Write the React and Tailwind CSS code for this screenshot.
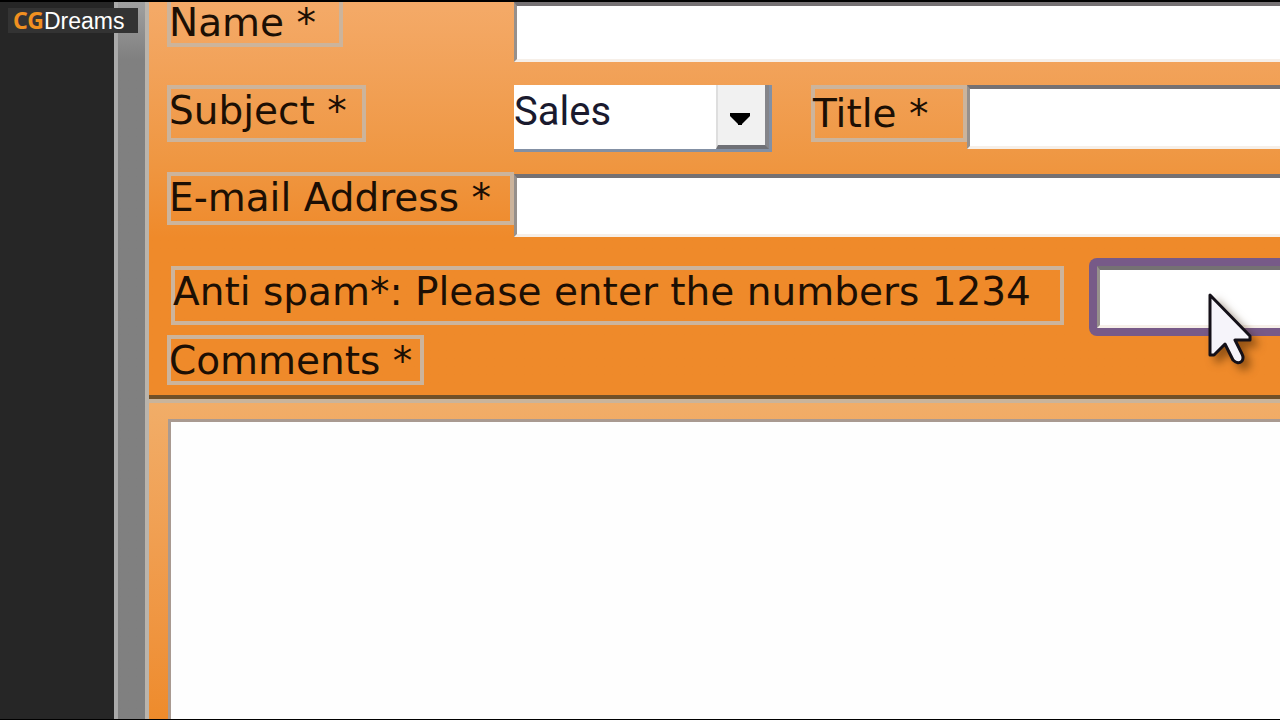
import { useState } from 'react';

const fieldClass =
  'block min-w-0 flex-1 border-l-[3px] border-t-4 border-b-[3px] border-l-[#96908c] border-t-[#757173] border-b-[#f6efe8] bg-white px-2 text-4xl outline-none';

function FieldLabel({ htmlFor, className, children }) {
  return (
    <label
      htmlFor={htmlFor}
      className={`block shrink-0 whitespace-nowrap pl-[2px] text-[39px] leading-[43px] text-[#1c0f04] inset-ring-4 inset-ring-[#ccb49c] ${className}`}
    >
      {children}
    </label>
  );
}

function Logo() {
  return (
    <div className="absolute left-2 top-1.5 flex h-[25px] w-[130px] items-baseline bg-[#333333] pl-[5px] leading-6">
      <span className="font-['Noto_Sans',sans-serif] text-[23px] font-bold leading-6 text-[#f09020]">CG</span>
      <span className="font-['Liberation_Sans',sans-serif] text-[23px] leading-6 text-white">Dreams</span>
    </div>
  );
}

function Cursor() {
  return (
    <svg
      className="pointer-events-none absolute left-[1204px] top-[284px] h-[90px] w-[60px] drop-shadow-[6px_6px_4px_rgba(60,30,0,0.5)]"
      viewBox="0 0 60 90"
      aria-hidden="true"
    >
      <path
        d="M6 9 V69 H10 L21 58 L29 74 Q34 79 38 75 Q40 72 38 68 L31 54 H46 V50 Z"
        fill="#f6f4fa"
        stroke="#141018"
        strokeWidth="3"
        strokeLinejoin="round"
      />
    </svg>
  );
}

export default function App() {
  const [form, setForm] = useState({
    name: '',
    subject: 'Sales',
    title: '',
    email: '',
    antispam: '',
    comments: '',
  });

  const update = (e) => setForm({ ...form, [e.target.name]: e.target.value });

  return (
    <div className="relative flex h-screen overflow-hidden border-t-2 border-b border-black bg-[#262626] font-['DejaVu_Sans',sans-serif]">
      <div className="w-[114px] shrink-0" />
      <div className="w-[35px] shrink-0 border-x-4 border-l-[#aaaaaa] border-r-[#bab4ac] bg-linear-to-b from-[#a0a0a0] to-[#808080] to-8%" />

      <form className="flex min-w-0 flex-1 flex-col" onSubmit={(e) => e.preventDefault()}>
        {/* contact details */}
        <div className="bg-linear-to-b from-[#f4aa68] via-[#ef9742] via-40% to-[#ef8a2a] to-60% pb-[10px]">
          <div className="flex items-start pl-[18px]">
            <div className="w-[347px] shrink-0">
              <FieldLabel htmlFor="name" className="-mt-1 h-[49px] w-[176px] pt-[3px]">
                Name *
              </FieldLabel>
            </div>
            <input id="name" name="name" value={form.name} onChange={update} className={`${fieldClass} h-[60px]`} />
          </div>

          {/* subject and title share a row */}
          <div className="mt-[23px] flex items-start pl-[18px]">
            <div className="w-[347px] shrink-0">
              <FieldLabel htmlFor="subject" className="h-[57px] w-[199px] pt-1">
                Subject *
              </FieldLabel>
            </div>
            <div className="relative h-[67px] w-[258px] shrink-0 border-b-[3px] border-r-[3px] border-[#8390a4] bg-white">
              <select
                id="subject"
                name="subject"
                value={form.subject}
                onChange={update}
                className="block h-[54px] w-full appearance-none bg-transparent font-[Roboto,sans-serif] text-[40px] leading-[54px] text-[#1a1a2e] outline-none"
              >
                <option>Sales</option>
                <option>Support</option>
              </select>
              <span className="pointer-events-none absolute inset-y-0 right-0 flex w-[53px] items-center justify-center border-b-4 border-l-2 border-r-4 border-b-[#6f7076] border-l-[#dedede] border-r-[#85858a] bg-[#f1f1f1] pr-1 pt-2">
                <svg className="h-3 w-5" viewBox="0 0 20 12" aria-hidden="true">
                  <path d="M0 0 H20 V3 L12 11 V12 H8 V11 L0 3 Z" fill="#000000" />
                </svg>
              </span>
            </div>
            <FieldLabel htmlFor="title" className="ml-[39px] h-[57px] w-[156px] pt-[7px]">
              Title *
            </FieldLabel>
            <input id="title" name="title" value={form.title} onChange={update} className={`${fieldClass} h-16`} />
          </div>

          <div className="mt-5 flex items-start pl-[18px]">
            <FieldLabel htmlFor="email" className="h-[53px] w-[347px] pt-1">
              E-mail Address *
            </FieldLabel>
            <input id="email" name="email" value={form.email} onChange={update} className={`${fieldClass} mt-0.5 h-[63px]`} />
          </div>

          <div className="mt-[21px] flex items-start pl-[22px]">
            <FieldLabel htmlFor="antispam" className="mt-2 h-[59px] w-[893px] pt-1">
              Anti spam*: Please enter the numbers 1234
            </FieldLabel>
            <div className="ml-[25px] flex min-w-0 flex-1 rounded-l-lg bg-[#775a88] py-2 pl-2">
              <input
                id="antispam"
                name="antispam"
                value={form.antispam}
                onChange={update}
                className={`${fieldClass} h-[62px]`}
              />
            </div>
          </div>

          <div className="-mt-px pl-[18px]">
            <FieldLabel htmlFor="comments" className="h-[50px] w-[257px] pt-1">
              Comments *
            </FieldLabel>
          </div>
        </div>

        {/* comments box */}
        <div className="flex min-h-0 flex-1 flex-col border-t-4 border-[#705028]">
          <div className="flex min-h-0 flex-1 border-t-4 border-[#c9b49b] bg-linear-to-b from-[#f1ad68] to-[#ee8b2b] pl-[19px] pt-4">
            <textarea
              id="comments"
              name="comments"
              value={form.comments}
              onChange={update}
              className="block min-w-0 flex-1 resize-none border-l-[3px] border-t-[3px] border-[#a99a91] bg-[#fefefe] p-2 text-4xl outline-none"
            />
          </div>
        </div>
      </form>

      <Logo />
      <Cursor />
    </div>
  );
}
